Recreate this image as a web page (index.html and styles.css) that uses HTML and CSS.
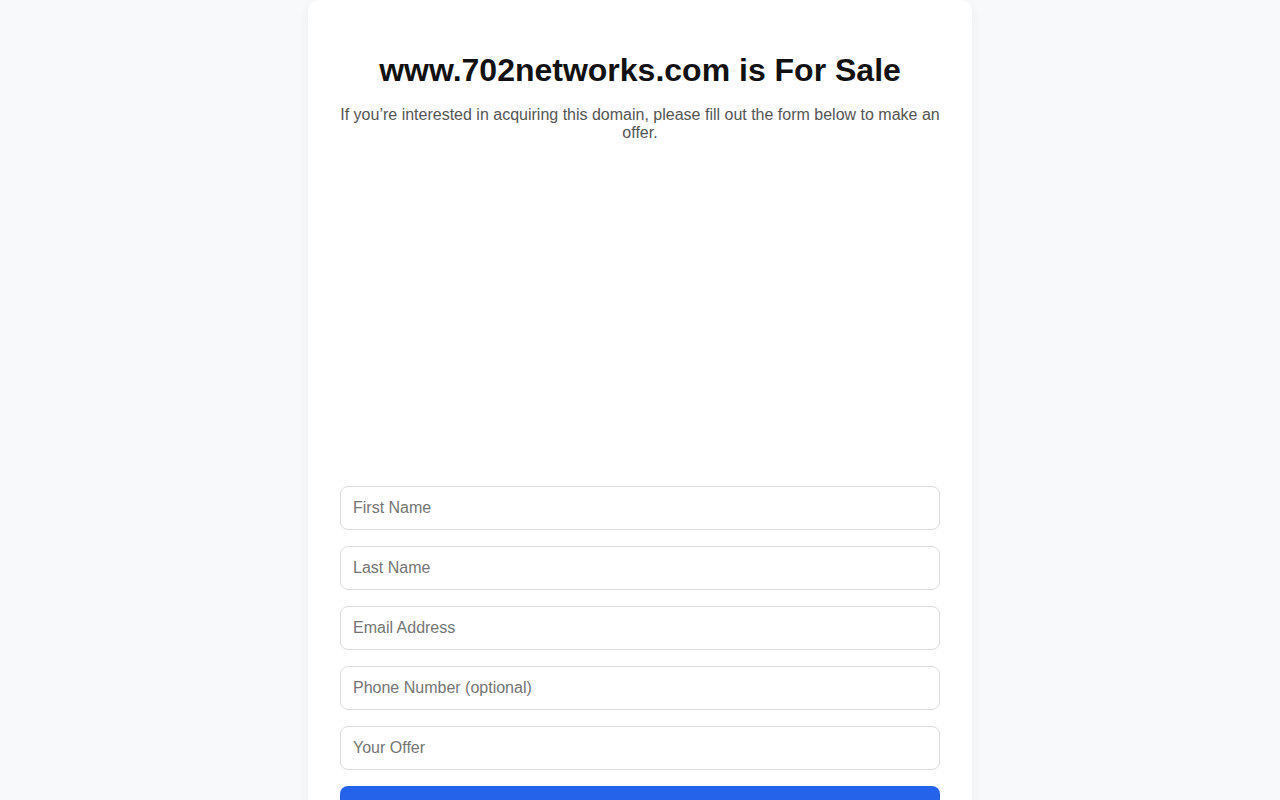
FILE: index.html
```html
<!DOCTYPE html>
<html lang="en">
<head>
<meta charset="utf-8">
<title>www.702networks.com is For Sale</title>
<link rel="stylesheet" href="styles.css">
</head>
<body>
<main class="card">
  <h1 class="title">www.702networks.com is For Sale</h1>
  <p class="lead">If you’re interested in acquiring this domain, please fill out the form below to make an offer.</p>
  <div class="embed"></div>
  <form class="form">
    <input class="field" type="text" placeholder="First Name">
    <input class="field" type="text" placeholder="Last Name">
    <input class="field" type="email" placeholder="Email Address">
    <input class="field" type="tel" placeholder="Phone Number (optional)">
    <input class="field" type="text" placeholder="Your Offer">
    <button class="submit" type="button">Submit Offer</button>
  </form>
</main>
</body>
</html>
```

FILE: styles.css
```css
html, body {
  margin: 0;
  padding: 0;
}
body {
  background: #f8f9fb;
  font-family: "Liberation Sans", Arial, sans-serif;
  display: flex;
  justify-content: center;
}
.card {
  width: 600px;
  background: #ffffff;
  padding: 32px;
  border-radius: 12px;
  box-shadow: 0 4px 12px rgba(0, 0, 0, 0.06);
}
.title {
  margin: 20px 0 17px;
  font-size: 32px;
  font-weight: 700;
  line-height: 37px;
  color: #111111;
  text-align: center;
}
.lead {
  margin: 0 0 16px;
  font-size: 16px;
  line-height: 18px;
  color: #555555;
  text-align: center;
}
.embed {
  height: 312px;
  margin-bottom: 16px;
}
.form {
  display: flex;
  flex-direction: column;
  gap: 16px;
}
.field {
  box-sizing: border-box;
  width: 100%;
  height: 44px;
  padding: 12px;
  border: 1px solid #dddddd;
  border-radius: 8px;
  font-family: "Liberation Sans", Arial, sans-serif;
  font-size: 16px;
  color: #333333;
  background: #ffffff;
  outline: none;
}
.field::placeholder {
  color: #757575;
}
.submit {
  width: 100%;
  height: 44px;
  border: none;
  border-radius: 8px;
  background: #2563eb;
  color: #ffffff;
  font-family: "Liberation Sans", Arial, sans-serif;
  font-size: 16px;
  font-weight: 700;
}
```
